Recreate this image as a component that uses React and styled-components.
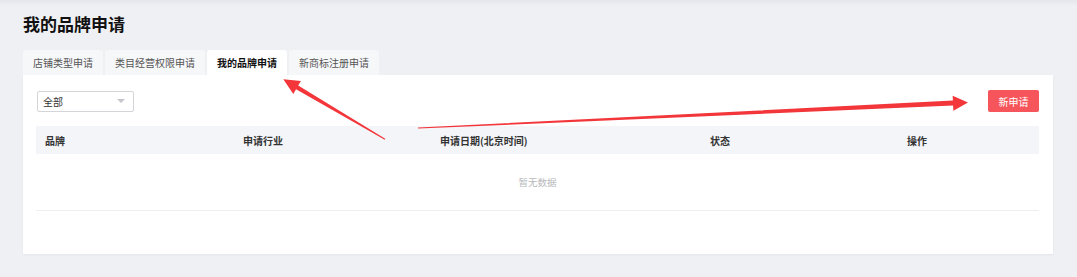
import React from "react";
import styled, { createGlobalStyle } from "styled-components";

const Global = createGlobalStyle`
  html, body { margin: 0; padding: 0; }
  body {
    background: #eff0f4;
    font-family: "Noto Sans CJK SC", "Noto Sans", sans-serif;
    color: #333;
  }
`;

const Page = styled.div`
  position: relative;
  width: 1077px;
  height: 277px;
  box-sizing: border-box;
  padding: 0 24px 0 23px;
  background: linear-gradient(#e6e7ec 0px, #eff0f4 6px, #eff0f4 100%);
  overflow: hidden;
`;

const Title = styled.h1`
  margin: 0;
  padding-top: 12px;
  height: 24px;
  line-height: 24px;
  font-size: 17px;
  font-weight: 700;
  color: #111;
`;

const Tabs = styled.div`
  display: flex;
  gap: 2px;
  margin-top: 14px;
  height: 25px;
`;

const Tab = styled.div`
  box-sizing: border-box;
  height: 25px;
  line-height: 25px;
  padding: 0 ${(p) => (p.$pad ? p.$pad : 10)}px;
  font-size: 10px;
  border-radius: 3px 3px 0 0;
  background: ${(p) => (p.$active ? "#fff" : "#f6f7f9")};
  color: ${(p) => (p.$active ? "#111" : "#555")};
  font-weight: ${(p) => (p.$active ? 700 : 400)};
  white-space: nowrap;
`;

const Card = styled.div`
  box-sizing: border-box;
  width: 1030px;
  height: 179px;
  background: #fff;
  padding: 15px 14px 0 13px;
  box-shadow: 0 1px 2px rgba(0, 0, 0, 0.05);
`;

const Toolbar = styled.div`
  display: flex;
  justify-content: space-between;
  align-items: center;
  height: 22px;
`;

const Select = styled.div`
  box-sizing: border-box;
  margin-left: 1px;
  width: 97px;
  height: 21px;
  border: 1px solid #d4d5d9;
  border-radius: 2px;
  display: flex;
  align-items: center;
  justify-content: space-between;
  padding: 0 8px 0 5px;
  font-size: 10px;
  color: #333;
`;

const Caret = styled.span`
  width: 0;
  height: 0;
  border-left: 4px solid transparent;
  border-right: 4px solid transparent;
  border-top: 4px solid #c4c6cc;
`;

const PrimaryButton = styled.button`
  box-sizing: border-box;
  width: 51px;
  height: 22px;
  border: none;
  border-radius: 2px;
  background: #f6565b;
  color: #fff;
  font-family: inherit;
  font-size: 10px;
  padding: 0;
  cursor: pointer;
`;

const Table = styled.div`
  margin-top: 14px;
`;

const HeadRow = styled.div`
  display: grid;
  grid-template-columns: 198px 197px 270px 197px 1fr;
  height: 28px;
  align-items: center;
  background: #f4f5f8;
`;

const HeadCell = styled.div`
  padding-left: 9px;
  font-size: 10px;
  font-weight: 700;
  color: #333;
`;

const Empty = styled.div`
  height: 56px;
  border-bottom: 1px solid #eeeff2;
  display: flex;
  align-items: center;
  justify-content: center;
  font-size: 9.5px;
  color: #b8b9bd;
`;

const Annotations = styled.svg`
  position: absolute;
  left: 0;
  top: 0;
  width: 1077px;
  height: 277px;
  pointer-events: none;
`;

const tabs = [
  { label: "店铺类型申请" },
  { label: "类目经营权限申请" },
  { label: "我的品牌申请", active: true },
  { label: "新商标注册申请" },
];

const columns = ["品牌", "申请行业", "申请日期(北京时间)", "状态", "操作"];

export default function App() {
  return (
    <>
      <Global />
      <Page>
        <Title>我的品牌申请</Title>
        <Tabs>
          {tabs.map((t) => (
            <Tab key={t.label} $active={t.active}>
              {t.label}
            </Tab>
          ))}
        </Tabs>
        <Card>
          <Toolbar>
            <Select>
              <span>全部</span>
              <Caret />
            </Select>
            <PrimaryButton>新申请</PrimaryButton>
          </Toolbar>
          <Table>
            <HeadRow>
              {columns.map((c) => (
                <HeadCell key={c}>{c}</HeadCell>
              ))}
            </HeadRow>
            <Empty>暂无数据</Empty>
          </Table>
        </Card>
        <Annotations viewBox="0 0 1077 277">
          <polygon
            fill="#f2363a"
            points="385.25,138.87 298.2,85.5 300.9,80.9 283.3,79.3 293.3,93.9 296.0,89.3 384.75,139.73"
          />
          <polygon
            fill="#f2363a"
            points="418,127.6 952.9,100.6 952.65,95.7 968,102.5 953.35,110.7 953.1,105.6 418,128.6"
          />
        </Annotations>
      </Page>
    </>
  );
}
